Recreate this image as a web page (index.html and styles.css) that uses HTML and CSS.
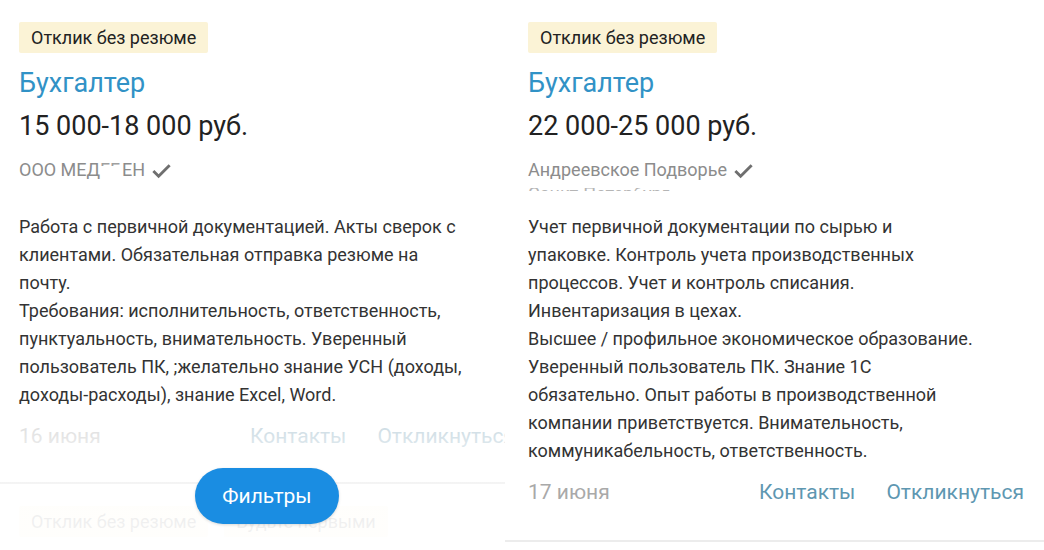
FILE: index.html
```html
<!DOCTYPE html>
<html lang="ru">
<head>
<meta charset="utf-8">
<title>Вакансии</title>
<link rel="stylesheet" href="styles.css">
</head>
<body>
<div class="screen">
  <div class="phone phone-left">
    <div class="card">
      <div class="badges"><span class="badge">Отклик без резюме</span></div>
      <div class="title">Бухгалтер</div>
      <div class="salary">15 000-18 000 руб.</div>
      <div class="company">ООО МЕД<span class="erased"><span>ГГ</span></span>ЕН
        <svg class="check" viewBox="0 0 24 24" width="23" height="23"><path d="M3.5 12.5 L9 18 L20.5 6.5" fill="none" stroke="#6f6f6f" stroke-width="3"/></svg>
      </div>
      <div class="clip"></div>
      <div class="desc">Работа с первичной документацией. Акты сверок с<br>клиентами. Обязательная отправка резюме на<br>почту.<br>Требования: исполнительность, ответственность,<br>пунктуальность, внимательность. Уверенный<br>пользователь ПК, ;желательно знание УСН (доходы,<br>доходы-расходы), знание Excel, Word.</div>
      <div class="footer faded">
        <span class="date">16 июня</span>
        <span class="actions"><span class="action">Контакты</span><span class="action">Откликнуться</span></span>
      </div>
    </div>
    <div class="card next">
      <div class="badges"><span class="badge">Отклик без резюме</span><span class="badge">Будьте первыми</span></div>
    </div>
    <div class="fade"></div>
    <button class="filters">Фильтры</button>
  </div>
  <div class="phone phone-right">
    <div class="card last">
      <div class="badges"><span class="badge">Отклик без резюме</span></div>
      <div class="title">Бухгалтер</div>
      <div class="salary">22 000-25 000 руб.</div>
      <div class="company">Андреевское Подворье
        <svg class="check" viewBox="0 0 24 24" width="23" height="23"><path d="M3.5 12.5 L9 18 L20.5 6.5" fill="none" stroke="#6f6f6f" stroke-width="3"/></svg>
      </div>
      <div class="clip"><span>Санкт-Петербург</span></div>
      <div class="desc">Учет первичной документации по сырью и<br>упаковке. Контроль учета производственных<br>процессов. Учет и контроль списания.<br>Инвентаризация в цехах.<br>Высшее / профильное экономическое образование.<br>Уверенный пользователь ПК. Знание 1С<br>обязательно. Опыт работы в производственной<br>компании приветствуется. Внимательность,<br>коммуникабельность, ответственность.</div>
      <div class="footer">
        <span class="date">17 июня</span>
        <span class="actions"><span class="action">Контакты</span><span class="action">Откликнуться</span></span>
      </div>
    </div>
  </div>
</div>
</body>
</html>
```

FILE: styles.css
```css
* { box-sizing: border-box; }
html, body { margin: 0; padding: 0; background: #fff; }
body { font-family: Roboto, "Noto Sans", sans-serif; color: #222; width: 1044px; height: 550px; overflow: hidden; }

.screen { display: flex; width: 1044px; height: 550px; }

.phone { position: relative; overflow: hidden; height: 550px; background: #fff; }
.phone-left { width: 505px; flex: none; }
.phone-right { width: 539px; flex: none; }

.card { width: 535px; padding: 22px 20px 0 19px; }
.phone-right .card { width: 539px; padding-left: 23px; }
.card.last { border-bottom: 2px solid #ececec; padding-bottom: 35px; }
.phone-left .card:first-child { border-bottom: 2px solid #e2e2e2; padding-bottom: 33px; }

.badges { display: flex; gap: 16px; }
.badge { display: inline-block; height: 31px; line-height: 31px; padding: 0 12px; background: #fbf3d6; font-size: 18px; color: #222; border-radius: 2px; }

.title { margin-top: 14px; font-size: 27px; line-height: 32px; color: #3192c6; }
.salary { margin-top: 10px; font-size: 27px; line-height: 34px; color: #222; }
.company { margin-top: 15px; font-size: 18px; line-height: 24px; color: #8c8c8c; display: flex; align-items: center; }
.company .check { margin-left: 5px; }
.erased { display: inline-block; width: 22px; height: 24px; overflow: hidden; }
.erased span { display: block; height: 24px; line-height: 24px; color: #a0a0a0; letter-spacing: 0; clip-path: inset(5px 0 16px 0); }
.check { display: block; }

.clip { height: 9px; overflow: hidden; font-size: 18px; line-height: 24px; color: #b5b5b5; }
.clip span { display: block; clip-path: inset(6px 0 0 0); }

.desc { margin-top: 22px; font-size: 18px; line-height: 28px; color: #333; white-space: nowrap; }

.footer { margin-top: 14px; display: flex; justify-content: space-between; font-size: 21px; line-height: 26px; white-space: nowrap; }
.date { color: #a9a9a9; }
.actions { display: flex; gap: 31px; }
.action { color: #5e97b1; }
.footer.faded .date { color: #d9d9d9; }
.footer.faded .action { color: #c3d5de; }

.card.next { padding-top: 22px; opacity: 0.22; }

.fade { position: absolute; left: 0; right: 0; top: 412px; bottom: 0; background: linear-gradient(to bottom, rgba(255,255,255,0) 0%, rgba(255,255,255,0.55) 30%, rgba(255,255,255,0.75) 100%); pointer-events: none; }

.filters { position: absolute; left: 195px; top: 468px; width: 144px; height: 56px; border: none; border-radius: 28px; background: #1a8de2; color: #fff; font-family: Roboto, "Noto Sans", sans-serif; font-size: 21px; padding: 0; box-shadow: 0 1px 3px rgba(0,0,0,0.15); }
```
